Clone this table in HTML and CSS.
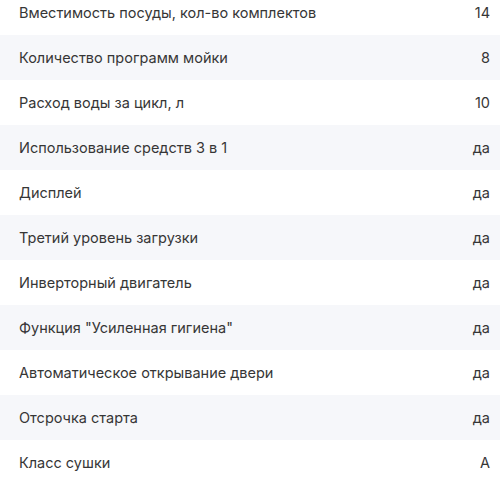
FILE: index.html
```html
<!DOCTYPE html>
<html lang="ru">
<head>
<meta charset="utf-8">
<link rel="stylesheet" href="styles.css">
</head>
<body>
<div class="specs">
  <div class="row"><span class="name">Вместимость посуды, кол-во комплектов</span><span class="val">14</span></div>
  <div class="row alt"><span class="name">Количество программ мойки</span><span class="val">8</span></div>
  <div class="row"><span class="name">Расход воды за цикл, л</span><span class="val">10</span></div>
  <div class="row alt"><span class="name">Использование средств 3 в 1</span><span class="val">да</span></div>
  <div class="row"><span class="name">Дисплей</span><span class="val">да</span></div>
  <div class="row alt"><span class="name">Третий уровень загрузки</span><span class="val">да</span></div>
  <div class="row"><span class="name">Инверторный двигатель</span><span class="val">да</span></div>
  <div class="row alt"><span class="name">Функция "Усиленная гигиена"</span><span class="val">да</span></div>
  <div class="row"><span class="name">Автоматическое открывание двери</span><span class="val">да</span></div>
  <div class="row alt"><span class="name">Отсрочка старта</span><span class="val">да</span></div>
  <div class="row"><span class="name">Класс сушки</span><span class="val">А</span></div>
</div>
</body>
</html>
```
FILE: styles.css
```css
html, body {
  margin: 0;
  padding: 0;
  background: #fff;
}
body {
  font-family: Inter, "Noto Sans", sans-serif;
  font-size: 14.5px;
  color: #363636;
}
.specs {
  margin-top: -10px;
}
.row {
  height: 45px;
  display: flex;
  align-items: center;
  justify-content: space-between;
  padding: 0 10px 0 19px;
  box-sizing: border-box;
}
.row.alt {
  background: #f6f7fa;
}
```
